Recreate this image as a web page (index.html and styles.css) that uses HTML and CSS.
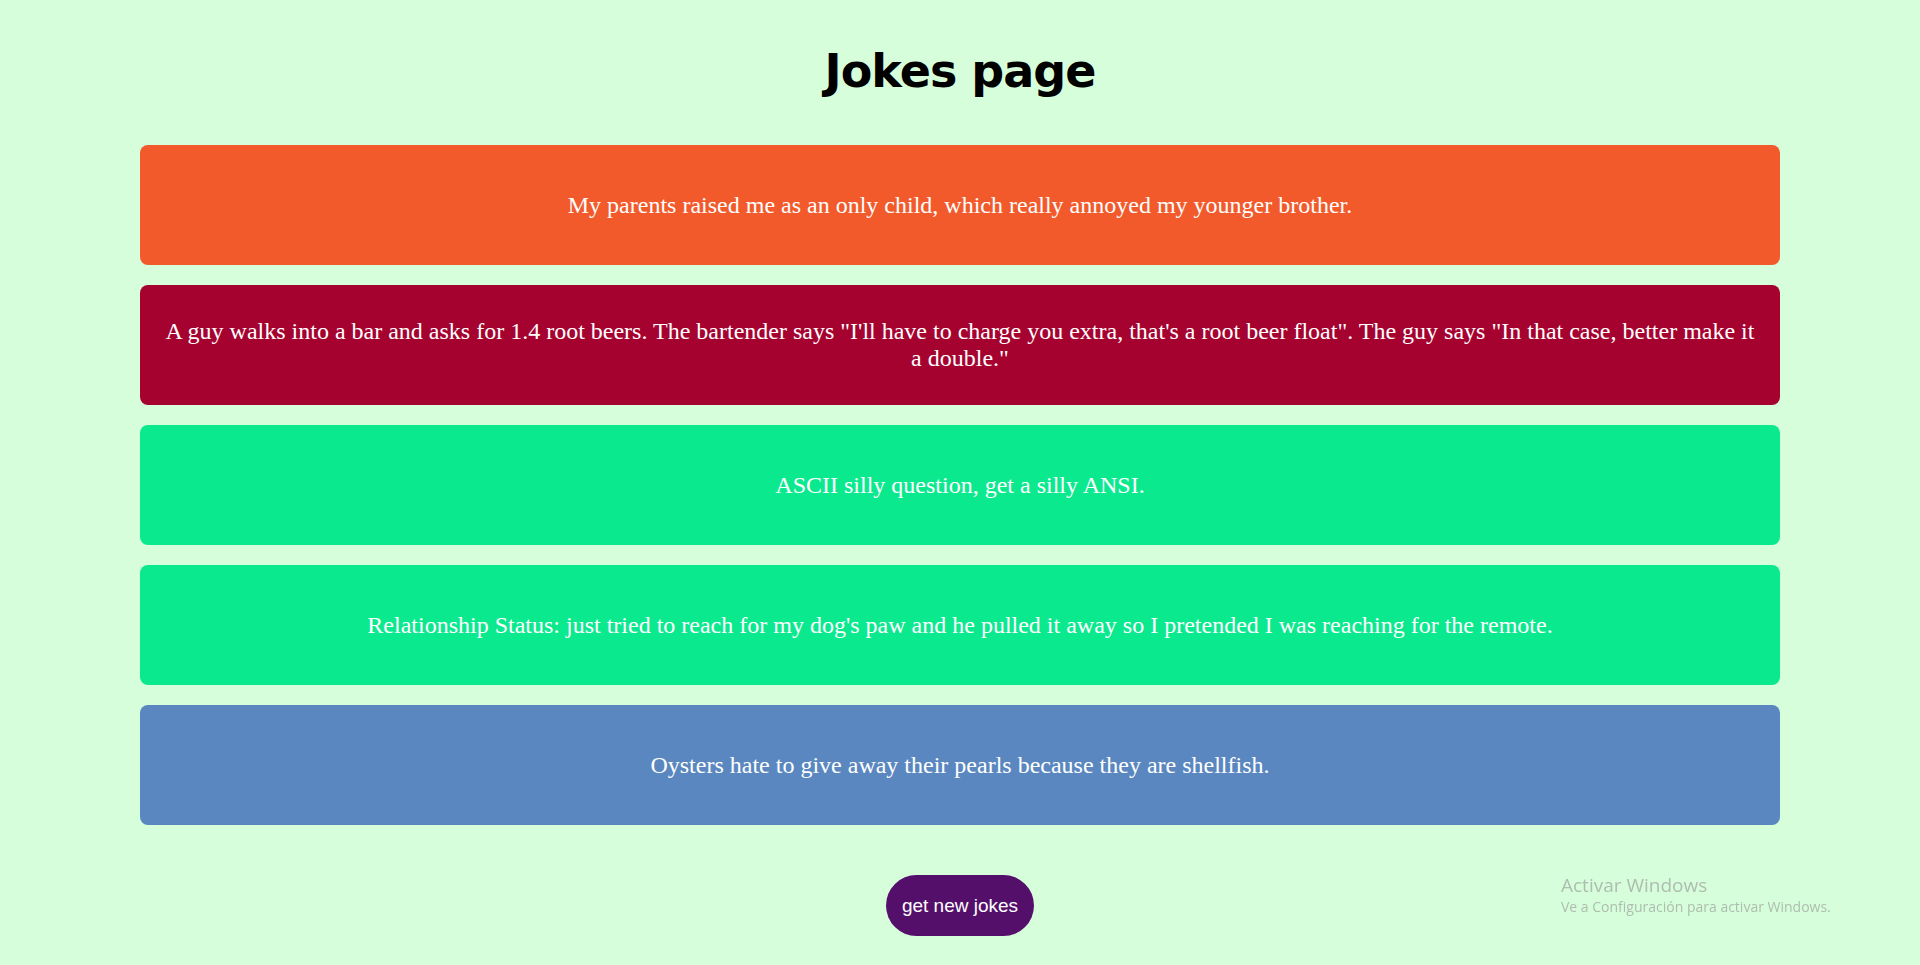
FILE: index.html
```html
<!DOCTYPE html>
<html lang="en">
<head>
<meta charset="utf-8">
<title>Jokes page</title>
<link rel="stylesheet" href="styles.css">
</head>
<body>
<main class="page">
  <h1 class="title">Jokes page</h1>
  <section class="jokes">
    <div class="joke joke-orange">My parents raised me as an only child, which really annoyed my younger brother.</div>
    <div class="joke joke-crimson">A guy walks into a bar and asks for 1.4 root beers. The bartender says "I'll have to charge you extra, that's a root beer float". The guy says "In that case, better make it a double."</div>
    <div class="joke joke-green">ASCII silly question, get a silly ANSI.</div>
    <div class="joke joke-green">Relationship Status: just tried to reach for my dog's paw and he pulled it away so I pretended I was reaching for the remote.</div>
    <div class="joke joke-blue">Oysters hate to give away their pearls because they are shellfish.</div>
  </section>
  <button class="more" type="button">get new jokes</button>
</main>
<div class="activate">
  <div class="activate-title">Activar Windows</div>
  <div class="activate-sub">Ve a Configuración para activar Windows.</div>
</div>
</body>
</html>
```

FILE: styles.css
```css
html, body {
  margin: 0;
  padding: 0;
}

body {
  background: #d7fedb;
  min-height: 100vh;
  font-family: "Liberation Serif", "Times New Roman", serif;
}

.page {
  display: flex;
  flex-direction: column;
  align-items: center;
  padding-top: 43px;
}

.title {
  margin: 0 0 46px;
  font-family: "DejaVu Sans", sans-serif;
  font-weight: bold;
  font-size: 46px;
  line-height: 56px;
  letter-spacing: -1px;
  color: #000;
}

.jokes {
  width: 1640px;
  display: flex;
  flex-direction: column;
  gap: 20px;
}

.joke {
  height: 120px;
  box-sizing: border-box;
  padding: 0 20px;
  border-radius: 8px;
  display: flex;
  align-items: center;
  justify-content: center;
  text-align: center;
  color: #fff;
  font-size: 24px;
}

.joke-orange { background: #f25a2b; }
.joke-crimson { background: #a6022f; }
.joke-green { background: #0be98f; }
.joke-blue { background: #5a87bf; }

.more {
  margin-top: 50px;
  padding: 19px 16px;
  border: none;
  border-radius: 31px;
  background: #540f6b;
  color: #fff;
  font-family: "Liberation Sans", Arial, sans-serif;
  font-size: 19px;
  line-height: 23px;
  cursor: pointer;
}

.activate {
  position: fixed;
  left: 1561px;
  top: 873px;
  color: #adbdb0;
  font-family: "Open Sans", sans-serif;
  pointer-events: none;
}

.activate-title {
  font-size: 19px;
  line-height: 25px;
}

.activate-sub {
  font-size: 14px;
  line-height: 18px;
}
```
